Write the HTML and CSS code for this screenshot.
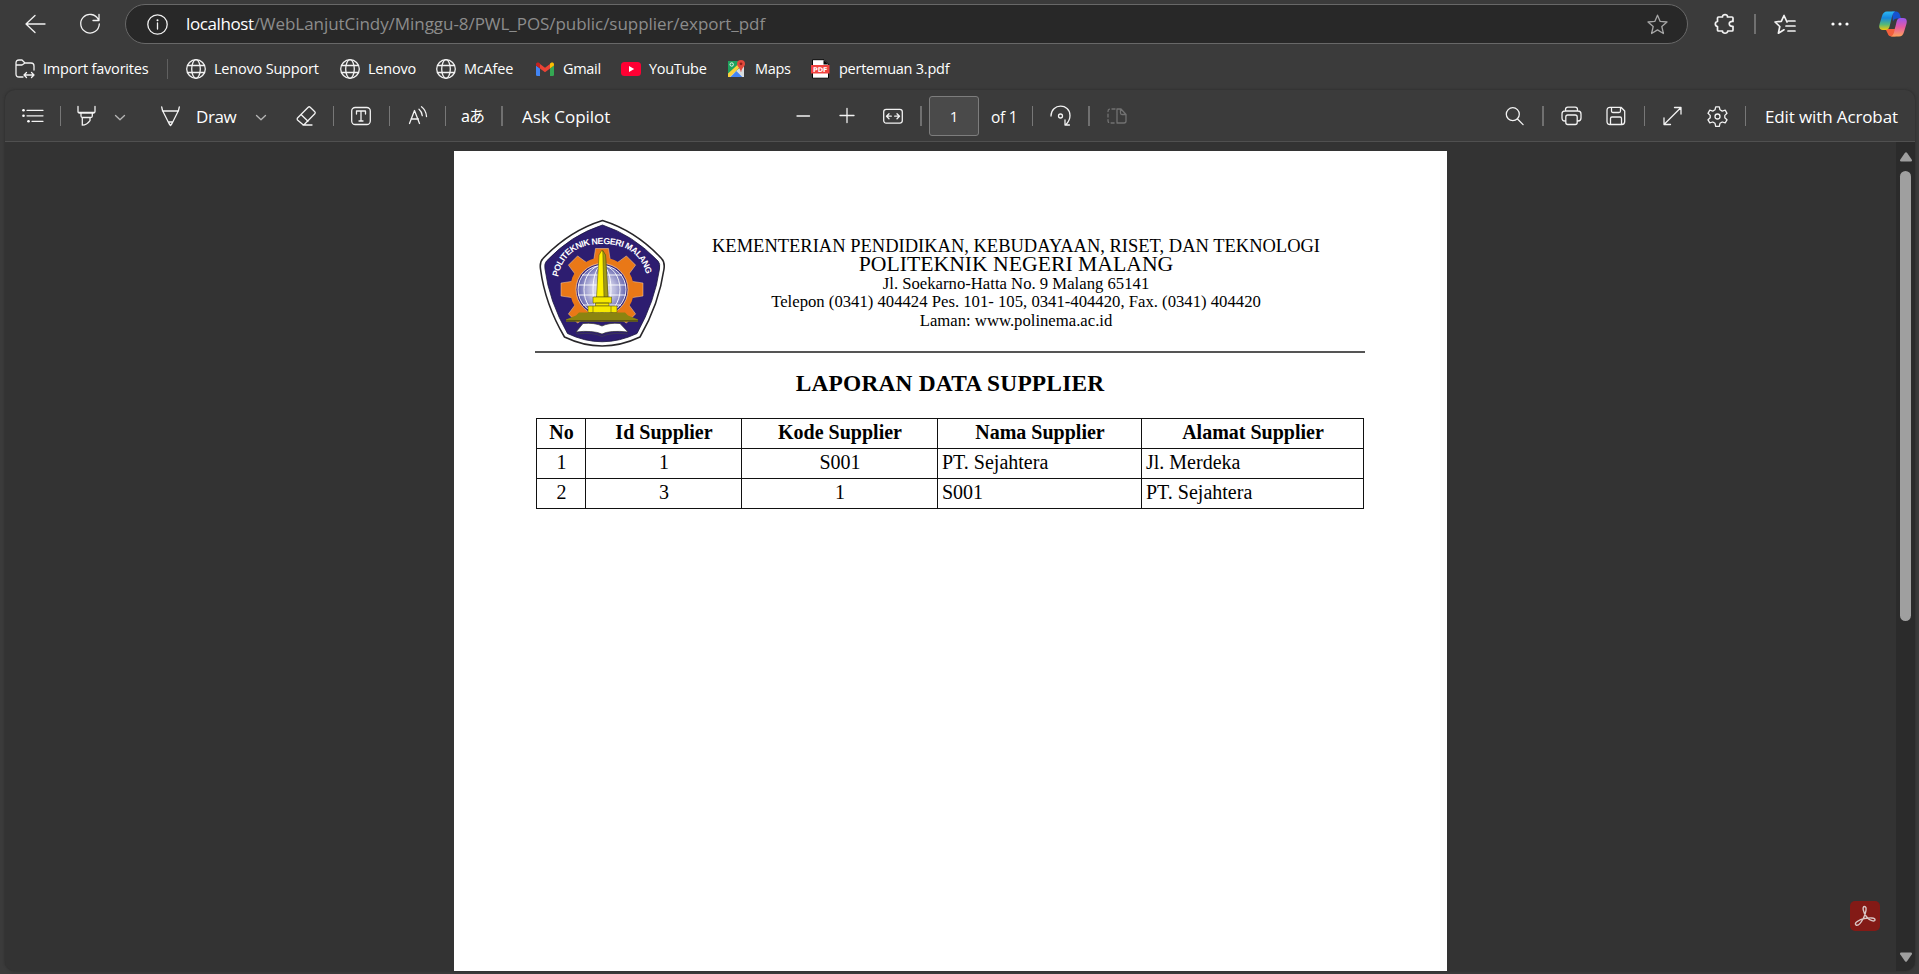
FILE: index.html
```html
<!DOCTYPE html>
<html lang="id">
<head>
<meta charset="utf-8">
<title>export_pdf</title>
<link rel="stylesheet" href="styles.css">
</head>
<body>
<div class="browser">
  <header class="nav-row">
    <svg class="i w20 ml25" viewBox="0 0 20 20"><path d="M10 1.500 1 10l9 8.500M1 10h19"/></svg>
    <svg class="i w20 ml35" viewBox="0 0 20 20"><path d="M18.300 5.500A9.300 9.300 0 1 0 19.300 10M19 .5v6h-6"/></svg>
    <div class="address">
      <svg class="i w21" viewBox="0 0 21 21"><circle cx="10.500" cy="10.500" r="9.700"/><path d="M10.500 9v6"/><circle class="dot" cx="10.500" cy="6.200" r="1"/></svg>
      <div class="url"><span class="host">localhost</span><span class="path">/WebLanjutCindy/Minggu-8/PWL_POS/public/supplier/export_pdf</span></div>
      <svg class="i w21 dim" viewBox="0 0 21 21"><path d="m10.500 1.200 2.700 6.200 6.800.6-5.200 4.500 1.600 7-5.900-3.600-5.900 3.600 1.600-7L1 8l6.800-.6z"/></svg>
    </div>
    <svg class="i w20 ml27 thick" viewBox="0 0 20 20"><path d="M3.500 3h4C7.300-.2 12.800-.2 12.500 3H17q1 0 1 1v3.500c-5-.8-5 5.500 0 4.800V16q0 1-1 1h-4.300c.2 3-5.500 3-5.200 0h-4q-1 0-1-1v-3.500C-.4 12-.4 8 2.500 7.500V4q0-1 1-1z"/></svg>
    <span class="bar2 ml19"></span>
    <svg class="i w21 ml18 thick" viewBox="0 0 21 21"><path d="M13 8 10 1.500 7.300 7.300 1 8l4.800 4.500-1.400 6.700 5.600-3.400M14 7h7M12 12h9M14 17h7"/></svg>
    <svg class="i w20 ml35" viewBox="0 0 20 20"><g class="dot"><circle cx="3" cy="10" r="1.600"/><circle cx="10" cy="10" r="1.600"/><circle cx="17" cy="10" r="1.600"/></g></svg>
    <svg class="copilot" viewBox="0 0 28 26">
      <defs>
        <linearGradient id="ca" x1="0" y1="0" x2="0" y2="1"><stop offset="0" stop-color="#2cb8f4"/><stop offset=".35" stop-color="#1687dd"/><stop offset=".7" stop-color="#55b879"/><stop offset="1" stop-color="#f2c90b"/></linearGradient>
        <linearGradient id="cb" x1="0" y1="0" x2="0" y2="1"><stop offset="0" stop-color="#9a55ef"/><stop offset=".5" stop-color="#e65aa0"/><stop offset="1" stop-color="#fda35a"/></linearGradient>
      </defs>
      <path fill="#1652cf" d="M13 .5h4q3 0 4 3.500l1 3.500h-4q-3 0-4 3z"/>
      <path fill="#f2603c" d="M6.500 18h9l2-3-1 10.500h-4q-3 0-3.800-3z"/>
      <path fill="url(#ca)" d="M8 .5h8q-2 .8-2.700 4L10.700 15q-1 4-4 4H4Q-1 19 .6 13L3 5Q4.300.5 8 .5z"/>
      <path fill="url(#cb)" d="M20 25.500h-8q2.200-.7 3-4L17.500 11q.8-4 4-4H24q5 0 3.400 6L25 21q-1.300 4.500-5 4.500z"/>
    </svg>
  </header>

  <nav class="fav-row">
    <svg class="i w20 ml15" viewBox="0 0 20 20"><path d="M8 18H4q-3 0-3-3V4q0-3 3-3h3l3 3h6q3 0 3 3v4M1 6h6l3-2M9 16h10M11.500 13.500 9 16l2.500 2.500M16.500 13.500 19 16l-2.500 2.500"/></svg>
    <span class="fav t-import">Import favorites</span>
    <span class="bar1 dimbar"></span>
    <svg class="i w20 ml18" viewBox="0 0 20 20"><circle cx="10" cy="10" r="9.300"/><ellipse cx="10" cy="10" rx="4.300" ry="9.300"/><path d="M1.500 6.500h17M1.500 13.500h17"/></svg>
    <span class="fav t-lensup">Lenovo Support</span>
    <svg class="i w20" viewBox="0 0 20 20"><circle cx="10" cy="10" r="9.300"/><ellipse cx="10" cy="10" rx="4.300" ry="9.300"/><path d="M1.500 6.500h17M1.500 13.500h17"/></svg>
    <span class="fav t-len">Lenovo</span>
    <svg class="i w20" viewBox="0 0 20 20"><circle cx="10" cy="10" r="9.300"/><ellipse cx="10" cy="10" rx="4.300" ry="9.300"/><path d="M1.500 6.500h17M1.500 13.500h17"/></svg>
    <span class="fav t-mcafee">McAfee</span>
    <svg class="w20" viewBox="0 0 20 20"><path fill="#4285f4" d="M1 6.500 5 9.500V17H2.300Q1 17 1 15.700z"/><path fill="#34a853" d="M15 9.500l4-3v9.200q0 1.300-1.300 1.300H15z"/><path fill="#ea4335" d="M5 5l5 3.800L15 5v4.500l-5 3.800-5-3.800z"/><path fill="#c5221f" d="M1 5.500C1 3.500 3 3 4.200 4L5 4.600v5L1 6.500z"/><path fill="#fbbc04" d="M19 5.500c0-2-2-2.500-3.200-1.500l-.8.600v5l4-3z"/></svg>
    <span class="fav t-gmail">Gmail</span>
    <svg class="w20" viewBox="0 0 20 20"><rect y="3" width="20" height="14" rx="3.500" fill="#ff0033"/><path fill="#fff" d="m8 7 5.200 3L8 13z"/></svg>
    <span class="fav t-yt">YouTube</span>
    <svg class="w20" viewBox="0 0 20 20"><path fill="#1fa15d" d="M1 2h14v8L1 18z"/><path fill="#d9dde0" d="M1 18 17 6v12z"/><path fill="#fbd13b" d="M1 14.500 12 4.500l2.500 2L3 18H1z"/><path fill="#4385f5" d="m3.500 18 6-6 6 6z"/><path fill="#d9dde0" d="m9.500 12 2-2 5.500 5.500V18h-1.500z"/><circle cx="4.700" cy="5.500" r="1.700" fill="none" stroke="#e8f5ec" stroke-width="1"/><path fill="#e1493c" d="M10 5a4 4 0 0 1 8 0c0 2.500-3.300 4-3.800 8h-.4C13.300 9 10 7.500 10 5z"/><circle cx="14" cy="4.800" r="1.400" fill="#8e1f1a"/></svg>
    <span class="fav t-maps">Maps</span>
    <svg class="w20" viewBox="0 0 20 20"><path fill="#fff" stroke="#080808" d="M1.500.7H13l4.500 4.500v14h-16z"/><path d="M12.500 1v4.500h5z" fill="#080808"/><path fill="#f1423f" d="M0 6h18.500v8.500H0z"/><text class="pdf-label" x="9.200" y="12.700" text-anchor="middle">PDF</text></svg>
    <span class="fav t-pdf">pertemuan 3.pdf</span>
  </nav>

  <section class="viewer">
    <div class="toolbar">
      <svg class="i w21 ml17" viewBox="0 0 21 20"><path d="M5 4.300h16M5 9.800h16M10 15.300h11"/><g class="dot"><circle cx="1.500" cy="4.300" r="1.300"/><circle cx="1.500" cy="9.800" r="1.300"/><circle cx="6.500" cy="15.300" r="1.300"/></g></svg>
      <span class="bar1 ml17"></span>
      <svg class="i w20 ml16" viewBox="0 0 20 20"><path d="M1 .5v5q0 1.500 1.500 1.500h14.200Q18 7 18 5.500v-5M1.500 6.300h16M4 7v3q0 1.500 1.500 1.500h8.300q1.500 0 1.500-1.500V7M5.300 11.500v7.700q4.500 0 7.700-4.500v-3.200"/></svg>
      <svg class="i w12 ml17 grey" viewBox="0 0 12 20"><path d="m1.500 9.500 4.500 4.300 4.500-4.300"/></svg>
      <svg class="i w20 ml35" viewBox="0 0 20 20"><path d="m.7 1 .8 3.500L8 17.500l1.500 2 1.500-2 6.500-13 .8-3.500M1.500 5h16M7.500 16h4"/></svg>
      <span class="tool t-draw">Draw</span>
      <svg class="i w12 grey" viewBox="0 0 12 20"><path d="m1.500 9.500 4.500 4.300 4.500-4.300"/></svg>
      <svg class="i w20 ml29" viewBox="0 0 20 20"><path d="M1.500 12 12.200 1.200q1-1 2 0l4.600 4.600q1 1 0 2L8.500 18.200q-1 1-2 0L1.500 14q-.8-1 0-2zM5 8.500l7 6.800M7 19h9"/></svg>
      <span class="bar1 ml17"></span>
      <svg class="i w20 ml17" viewBox="0 0 20 20"><rect x=".7" y="1.500" width="18.600" height="17" rx="3.500"/><path d="M5.500 8V5h9v3M10 5v10M8 15h4"/></svg>
      <span class="bar1 ml18"></span>
      <svg class="i w20 ml18" viewBox="0 0 20 20"><path d="m1.500 17.500 5-13 5 13M3 13h7.500M11 3.200q3 2.500 3.300 6.500M13.500.8Q18 4 18.500 10.500"/></svg>
      <span class="bar1 ml17"></span>
      <span class="translate">aあ</span>
      <span class="bar2 ml17"></span>
      <span class="tool t-ask">Ask Copilot</span>
      <svg class="i w14" viewBox="0 0 14 20"><path d="M1 10h12.500"/></svg>
      <svg class="i w14 ml30" viewBox="0 0 14 20"><path d="M0 9.500h14M7 2.500v14"/></svg>
      <svg class="i w20 ml29" viewBox="0 0 20 20"><rect x=".7" y="3.300" width="18.600" height="13.800" rx="2.500"/><path d="M8.300 10.200H3.500M6 7.700l-2.500 2.500L6 12.700M11.700 10.200h4.800M14 7.700l2.500 2.500-2.500 2.500"/></svg>
      <span class="bar2 ml17"></span>
      <span class="page-box">1</span>
      <span class="tool t-of">of 1</span>
      <span class="bar1"></span>
      <svg class="i w22 ml17" viewBox="0 0 22 20"><path d="M1 10C1-3 20-3 20 9.500q0 5-4 9M15 14v5h4.500"/><circle cx="10.500" cy="10" r="2"/></svg>
      <span class="bar2 ml16"></span>
      <svg class="i w20 ml17 faint" viewBox="0 0 20 20"><path d="M10 3v14h7q2 0 2-2V8.500L14 3zM13.500 3v4q0 1.500 1.500 1.500h4"/><path stroke-dasharray="3 2.500" d="M8 3H3.500Q1 3 1 5.500v9Q1 17 3.500 17H8"/></svg>
      <span class="spacer"></span>
      <svg class="i w20" viewBox="0 0 20 20"><circle cx="7.800" cy="8.200" r="6.500"/><path d="m12.500 13 5.600 5.600"/></svg>
      <span class="bar2 ml17"></span>
      <svg class="i w21 ml17" viewBox="0 0 21 20"><path d="M4.500 15H4q-3 0-3-3V8q0-3 3-3h13q3 0 3 3v4q0 3-3 3h-.5M4.500 5V3.500q0-2.300 2.300-2.300h7.400q2.300 0 2.300 2.300V5"/><rect x="4.800" y="9" width="11.400" height="9.500" rx="2"/></svg>
      <svg class="i w20 ml24" viewBox="0 0 20 20"><path d="M4 1.300h11l3.700 3.700v10.500q0 3-3 3H4q-3 0-3-3v-11q0-3.200 3-3.200zM5.500 1.500V5q0 1.500 1.500 1.500h6q1.500 0 1.500-1.500V1.500M4.500 18v-5.500Q4.500 11 6 11h8q1.500 0 1.500 1.500V18"/></svg>
      <span class="bar1 ml18"></span>
      <svg class="i w20 ml17" viewBox="0 0 20 20"><path d="M12.500 1.500H19V8M19 1.500 2 18.500M2 12v6.500h6.500"/></svg>
      <svg class="i w21 ml25" viewBox="0 0 21 21"><path d="M8.700.8h3.600l.7 3 2.200 1.300 3-.9 1.800 3.100-2.200 2.100v2.300l2.200 2.100-1.800 3.100-3-.9-2.200 1.300-.7 3H8.700l-.7-3-2.200-1.300-3 .9L1 13.800l2.200-2.100V9.400L1 7.300l1.800-3.100 3 .9L8 3.800z"/><circle cx="10.500" cy="10.500" r="2.500"/></svg>
      <span class="bar1 ml17"></span>
      <span class="tool t-edit">Edit with Acrobat</span>
    </div>

    <div class="canvas">
      <article class="sheet">
        <div class="letterhead">
          <svg class="logo" viewBox="0 0 128 128">
            <defs>
              <path id="arc" d="M20 58Q27 25 64 25Q102 25 109 58"/>
              <radialGradient id="gl"><stop offset="0" stop-color="#f4f4fc"/><stop offset=".55" stop-color="#b9b9dd"/><stop offset="1" stop-color="#6969b1"/></radialGradient>
            </defs>
            <path fill="#fff" stroke="#29272a" stroke-width="1.600" d="M64.500 1.500Q98 12 123.500 39.500Q127 43 126 50Q121 85 102 118Q64 136 26.500 118Q7 85 2.500 50Q1.500 43 5 39.500Q31 12 64.500 1.500z"/>
            <path fill="#2d1d70" stroke="#1b163c" stroke-width=".8" d="M64.500 6Q95 16 120 42Q122.500 44.500 121.500 50Q117 82 99 114.500Q64 131 29.500 114.500Q11 82 7 50Q6 44.500 8.500 42Q33 16 64.500 6z"/>
            <g fill="#e97817" stroke="#f8d3aa" stroke-width=".5">
              <path d="M55.500 43 57.500 29.500h13l2 13.500z"/>
              <path d="M55.500 43 57.500 29.500h13l2 13.500z" transform="rotate(45 64 70.500)"/>
              <path d="M55.500 43 57.500 29.500h13l2 13.500z" transform="rotate(90 64 70.500)"/>
              <path d="M55.500 43 57.500 29.500h13l2 13.500z" transform="rotate(135 64 70.500)"/>
              <path d="M55.500 43 57.500 29.500h13l2 13.500z" transform="rotate(225 64 70.500)"/>
              <path d="M55.500 43 57.500 29.500h13l2 13.500z" transform="rotate(270 64 70.500)"/>
              <path d="M55.500 43 57.500 29.500h13l2 13.500z" transform="rotate(315 64 70.500)"/>
            </g>
            <circle cx="64" cy="70.500" r="32" fill="#e97817"/>
            <circle cx="64" cy="70.500" r="26" fill="#39267a" stroke="#f8d3aa" stroke-width=".7"/>
            <circle cx="64" cy="70.500" r="24" fill="url(#gl)"/>
            <g fill="none" stroke="#fff" stroke-width=".9"><circle cx="64" cy="70.500" r="24"/><ellipse cx="64" cy="70.500" rx="9" ry="24"/><ellipse cx="64" cy="70.500" rx="18" ry="24"/><path d="M40 66h48M40 76h48M44 56h40M45 86h38"/></g>
            <g stroke="#5c5712" stroke-width=".6">
              <path fill="#fff200" d="M61 36 64 31l3.500 5 2.500 42H58.500z"/>
              <path fill="#a39b12" d="m64.800 31.500 2.700 4.500 2.500 42h-4z"/>
              <path fill="#f6e900" d="M55 78h18.500v6H55zM57.500 84h13.500v3H57.500z"/>
              <path fill="#f6e900" d="M50 87h29v6.500H50z"/>
              <path fill="none" d="M55 87v6.500M73 87v6.500"/>
            </g>
            <path fill="#8b8410" d="M41 93.500h46l3 3 10 4v2H28v-2l10-4z"/><path fill="#5c5712" d="M28 101h72v1.500H28z"/>
            <path fill="#fff" stroke="#333" stroke-width=".7" d="M38 113l7-8.500q12-1 19 2.500 7-3.500 18-2.500l8 8.500q-18-2-26 2-10-4-26-2z"/>
            <path fill="none" stroke="#444" stroke-width=".6" d="m38 113 1 2q16-2 25 2.500 9-4.500 26-2.500"/>
            <text class="logo-text"><textPath href="#arc" textLength="119" startOffset="0">POLITEKNIK NEGERI MALANG</textPath></text>
          </svg>
          <div class="org">
            <div class="l1">KEMENTERIAN PENDIDIKAN, KEBUDAYAAN, RISET, DAN TEKNOLOGI</div>
            <div class="l2">POLITEKNIK NEGERI MALANG</div>
            <div class="l3">Jl. Soekarno-Hatta No. 9 Malang 65141</div>
            <div class="l3">Telepon (0341) 404424 Pes. 101- 105, 0341-404420, Fax. (0341) 404420</div>
            <div class="l3">Laman: www.polinema.ac.id</div>
          </div>
        </div>
        <h3 class="title">LAPORAN DATA SUPPLIER</h3>
        <table class="data">
          <colgroup><col class="c1"><col class="c2"><col class="c3"><col class="c4"><col class="c5"></colgroup>
          <tr><th>No</th><th>Id Supplier</th><th>Kode Supplier</th><th>Nama Supplier</th><th>Alamat Supplier</th></tr>
          <tr><td class="mid">1</td><td class="mid">1</td><td class="mid">S001</td><td>PT. Sejahtera</td><td>Jl. Merdeka</td></tr>
          <tr><td class="mid">2</td><td class="mid">3</td><td class="mid">1</td><td>S001</td><td>PT. Sejahtera</td></tr>
        </table>
      </article>
      <div class="scrollbar">
        <svg class="w12h" viewBox="0 0 12 10"><path fill="#9f9f9f" d="M5 .8q1-1.200 2 0l4.800 7q.7 1.600-1 1.700H1.200Q-.5 9.400.2 7.800z"/></svg>
        <span class="thumb"></span>
        <span class="spacer"></span>
        <svg class="w12h" viewBox="0 0 12 10"><path fill="#9f9f9f" d="M5 9.200q1 1.200 2 0l4.800-7Q12.500.6 10.800.500H1.200Q-.5.6.2 2.200z"/></svg>
      </div>
      <div class="acrobat">
        <svg viewBox="0 0 30 30"><path fill="none" stroke="#d9c6c5" stroke-width="1.400" d="M14.500 5.500c2.800 0 1.500 6.500-1 11.500-2.300 4.500-5.500 8-7.500 7-2.500-1.800 3-5.500 8.500-6.500 5.500-1 10.500-.8 10.500 1.200 0 2.800-5.500.8-8.500-3-3.500-4.500-4.500-10.200-2-10.200z"/></svg>
      </div>
    </div>
  </section>
</div>
</body>
</html>
```
FILE: styles.css
```css
* { box-sizing: border-box; }
body { margin: 0; background: #3b3b3b; overflow: hidden; font-family: "Open Sans", "Noto Sans", sans-serif; color: #fff; }
svg { display: block; flex: none; }
.browser { width: 1919px; height: 974px; display: flex; flex-direction: column; background: #3b3b3b; }

.i { fill: none; stroke: #f2f2f2; stroke-width: 1.300; stroke-linecap: round; stroke-linejoin: round; overflow: visible; }
.i .dot { fill: #fff; stroke: none; }
.i.thick { stroke-width: 1.700; }
.i.dim { stroke: #a6a6a6; }
.i.grey { stroke: #b5b5b5; }
.i.faint { stroke: #727272; }
.w12 { width: 12px; } .w14 { width: 14px; } .w20 { width: 20px; } .w21 { width: 21px; } .w22 { width: 22px; }
.ml15 { margin-left: 15px; } .ml16 { margin-left: 16px; } .ml17 { margin-left: 17px; } .ml18 { margin-left: 18px; }
.ml19 { margin-left: 19px; } .ml24 { margin-left: 24px; } .ml25 { margin-left: 25px; } .ml27 { margin-left: 27px; }
.ml29 { margin-left: 29px; } .ml30 { margin-left: 30px; } .ml35 { margin-left: 35px; }
.bar1, .bar2 { flex: none; width: 1px; height: 20px; background: #777; }
.bar2 { width: 2px; background: #707070; }
.spacer { flex: 1; }

.nav-row { height: 48px; display: flex; align-items: center; flex: none; }
.address { width: 1563px; height: 40px; margin-left: 25px; padding: 0 19px 0 21px; display: flex; align-items: center; border: 1px solid #686868; border-radius: 20px; background: #282828; }
.url { flex: 1; margin-left: 18px; font-size: 17px; line-height: 24px; white-space: nowrap; color: #8c8c8c; }
.host { color: #fff; letter-spacing: -.4px; }
.path { letter-spacing: -.05px; }
.copilot { width: 28px; height: 26px; margin-left: 29px; }

.fav-row { height: 42px; padding-bottom: 1px; display: flex; align-items: center; flex: none; }
.fav { font-size: 14.500px; line-height: 20px; white-space: nowrap; margin-left: 8px; flex: none; letter-spacing: -.2px; }
.t-import { width: 124px; } .dimbar { background: #606060; }
.t-lensup { width: 126px; } .t-len { width: 68px; } .t-mcafee { width: 71px; }
.t-gmail { width: 58px; letter-spacing: -.3px; } .t-yt { width: 78px; letter-spacing: -.3px; } .t-maps { width: 56px; letter-spacing: -.3px; }
.t-pdf { letter-spacing: -.25px; }
.pdf-label { font: bold 6.500px "DejaVu Sans", sans-serif; fill: #fff; }

.viewer { width: 1910px; height: 881px; margin-left: 5px; border-radius: 10px; box-shadow: 0 0 2px 1px #333; display: flex; flex-direction: column; overflow: hidden; background: #333; }
.toolbar { height: 52px; padding-top: 1px; flex: none; display: flex; align-items: center; background: #3b3b3b; border-bottom: 1px solid #505050; }
.tool { font-size: 17px; line-height: 24px; padding-top: 1px; white-space: nowrap; flex: none; }
.t-draw { margin-left: 15px; width: 59px; letter-spacing: -.4px; }
.translate { width: 22px; margin-left: 15px; margin-right: 1px; font: 16px/20px "Noto Sans", "Noto Sans CJK JP", sans-serif; letter-spacing: -1px; white-space: nowrap; }
.t-ask { margin-left: 19px; width: 274px; letter-spacing: 0; }
.page-box { width: 50px; height: 40px; margin-left: 7px; border: 1px solid #7d7d7d; border-radius: 3px; background: #4a4a4a; text-align: center; font-size: 15px; line-height: 39px; }
.t-of { margin-left: 12px; width: 41px; font-size: 15.500px; letter-spacing: -.3px; }
.t-edit { margin-left: 19px; width: 150px; letter-spacing: -.12px; }

.canvas { position: relative; flex: 1; display: flex; justify-content: space-between; background: #333; }
.sheet { width: 993px; height: 820px; margin: 9px 0 0 449px; padding: 67px 82px 0 81px; background: #fff; color: #000; font-family: "Liberation Serif", serif; }
.letterhead { height: 135px; display: flex; border-bottom: 2px solid #555; }
.logo { width: 128px; height: 128px; margin: 1px 0 0 3px; }
.logo-text { font: bold 8.800px "Liberation Sans", sans-serif; fill: #fff; }
.org { flex: 1; padding: 19px 0 0 1px; text-align: center; white-space: nowrap; }
.l1 { font-size: 18.500px; line-height: 19px; }
.l2 { font-size: 21.700px; line-height: 17px; }
.l3 { font-size: 16.700px; line-height: 18.500px; position: relative; top: 1.500px; }
.title { margin: 16px 0 21px; font-size: 23.400px; line-height: 28px; letter-spacing: .2px; text-align: center; white-space: nowrap; }
.data { width: 828px; border-collapse: collapse; table-layout: fixed; margin-left: 1px; font-size: 20px; line-height: 22px; }
.data th, .data td { height: 30px; border: 1.500px solid #111; padding: 0 3px 3px 4px; text-align: left; white-space: nowrap; }
.data th, .data .mid { text-align: center; }
.c1 { width: 49px; } .c2 { width: 156px; } .c3 { width: 196px; } .c4 { width: 204px; } .c5 { width: 222px; }

.scrollbar { width: 19px; padding: 10px 0 9px; display: flex; flex-direction: column; align-items: center; background: #2b2b2b; }
.w12h { width: 12px; height: 10px; }
.thumb { width: 11px; height: 450px; margin-top: 9px; border-radius: 6px; background: #9f9f9f; flex: none; }
.acrobat { position: absolute; right: 35px; bottom: 40px; width: 30px; height: 30px; border-radius: 5px; background: #831a16; }
```
